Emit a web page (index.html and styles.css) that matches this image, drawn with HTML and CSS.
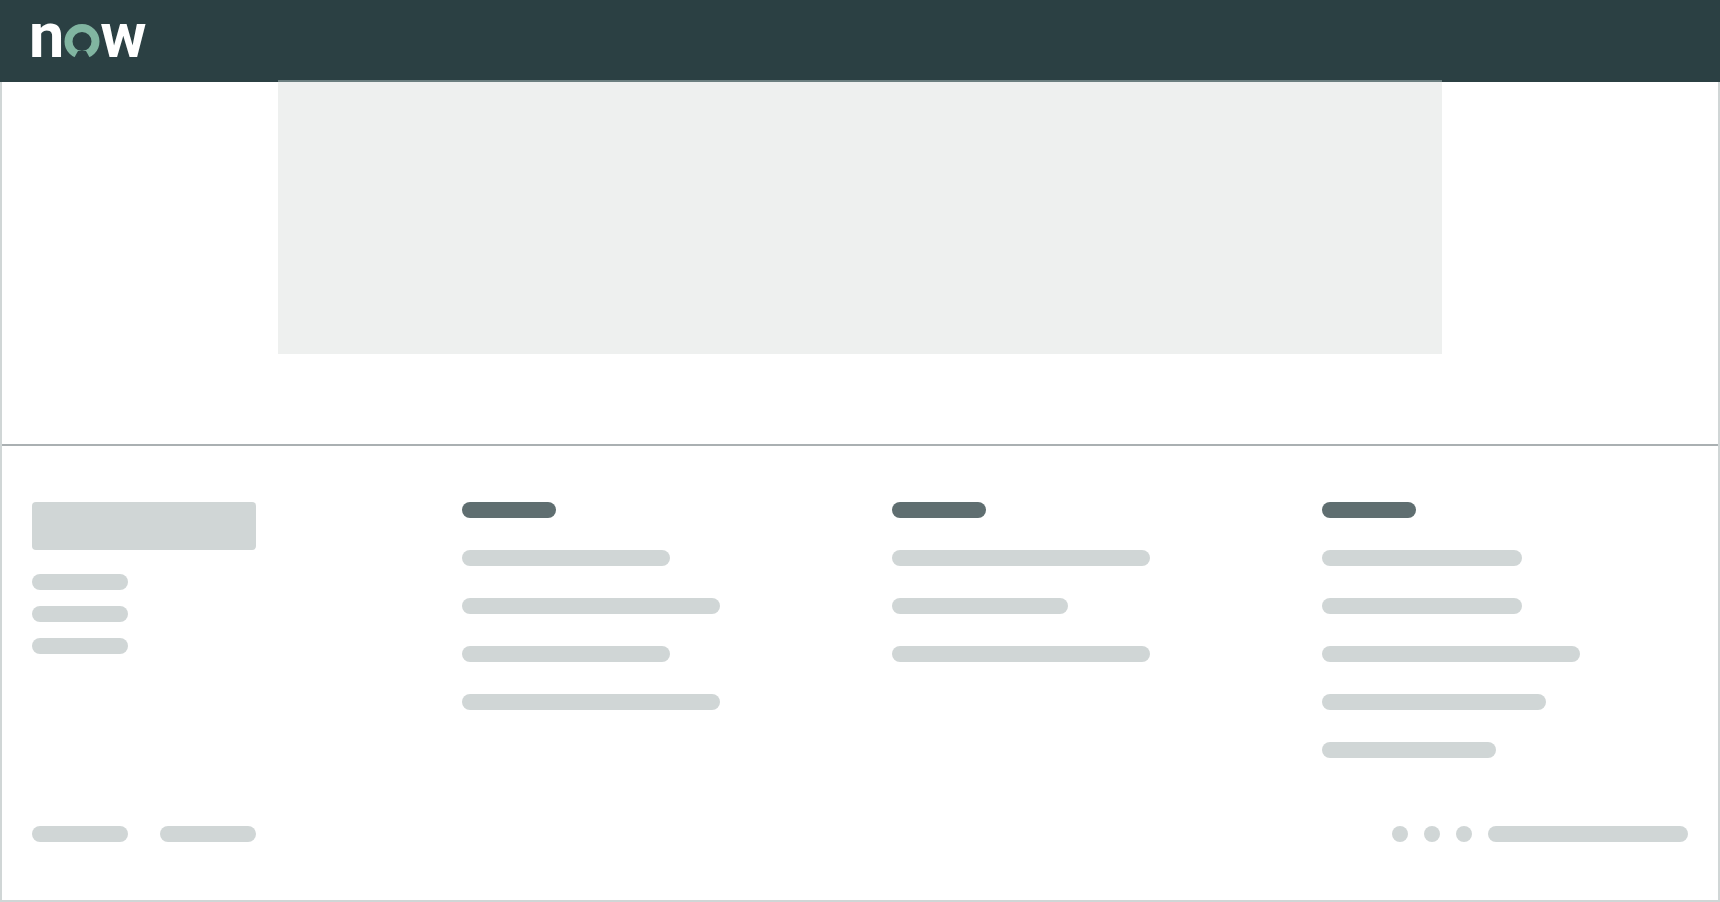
FILE: index.html
```html
<!DOCTYPE html>
<html lang="en">
<head>
    <meta charset="UTF-8">
    <title>Now</title>
    <link rel="stylesheet" href="styles.css">
</head>
<body>
    <header class="topbar">
        <div class="logo">
            <span class="logo-letter">n</span>
            <svg class="logo-o" width="36" height="36" viewBox="0 0 36 36">
                <circle cx="18" cy="17.5" r="13.5" fill="none" stroke="#81b5a1" stroke-width="8"/>
                <path d="M14 27 L22 27 L27 36 L9 36 Z" fill="#2b4043"/>
            </svg>
            <span class="logo-letter">w</span>
        </div>
    </header>

    <main class="frame">
        <section class="hero-wrap">
            <div class="hero"></div>
        </section>

        <footer class="footer">
            <div class="columns">
                <div class="brand">
                    <div class="brand-box"></div>
                    <div class="brand-lines">
                        <div class="bar w-96"></div>
                        <div class="bar w-96"></div>
                        <div class="bar w-96"></div>
                    </div>
                </div>
                <div class="col">
                    <div class="bar heading"></div>
                    <div class="bar w-208"></div>
                    <div class="bar w-258"></div>
                    <div class="bar w-208"></div>
                    <div class="bar w-258"></div>
                </div>
                <div class="col">
                    <div class="bar heading"></div>
                    <div class="bar w-258"></div>
                    <div class="bar w-176"></div>
                    <div class="bar w-258"></div>
                </div>
                <div class="col">
                    <div class="bar heading"></div>
                    <div class="bar w-200"></div>
                    <div class="bar w-200"></div>
                    <div class="bar w-258"></div>
                    <div class="bar w-224"></div>
                    <div class="bar w-174"></div>
                </div>
            </div>

            <div class="legal">
                <div class="legal-links">
                    <div class="bar w-96"></div>
                    <div class="bar w-96"></div>
                </div>
                <div class="legal-social">
                    <div class="dot"></div>
                    <div class="dot"></div>
                    <div class="dot"></div>
                    <div class="bar w-200"></div>
                </div>
            </div>
        </footer>
    </main>
</body>
</html>
```

FILE: styles.css
```css
html, body {
    margin: 0;
    padding: 0;
}
body {
    background-color: #fff;
    font-family: "Roboto", "Liberation Sans", sans-serif;
}
.topbar {
    height: 82px;
    background-color: #2b4043;
    display: flex;
    align-items: flex-start;
    padding-left: 29px;
}
.logo {
    display: flex;
    align-items: flex-start;
    height: 60px;
    margin-top: 18px;
}
.logo-letter {
    font-size: 63px;
    font-weight: 700;
    line-height: 36px;
    color: #fff;
}
.logo-o {
    margin: 6px 0 0 0;
}
.frame {
    height: 820px;
    box-sizing: border-box;
    border: 2px solid #d0d6d6;
    border-top: none;
}
.hero-wrap {
    height: 362px;
    display: flex;
    justify-content: center;
    align-items: flex-start;
    border-bottom: 2px solid #aab0b2;
}
.hero {
    width: 1164px;
    height: 272px;
    margin-top: -2px;
    background-color: #eef0ef;
    border-top: 2px solid #6c7f80;
}
.footer {
    padding: 56px 30px 0;
}
.columns {
    display: grid;
    grid-template-columns: 430px 430px 430px 1fr;
    height: 324px;
}
.bar {
    height: 16px;
    border-radius: 8px;
    background-color: #d0d6d6;
}
.brand-box {
    width: 224px;
    height: 48px;
    border-radius: 4px;
    background-color: #d0d6d6;
    margin-bottom: 24px;
}
.brand-lines {
    display: flex;
    flex-direction: column;
    gap: 16px;
}
.col {
    display: flex;
    flex-direction: column;
    gap: 32px;
}
.bar.heading {
    width: 94px;
    background-color: #5f6e70;
}
.w-96 { width: 96px; }
.w-174 { width: 174px; }
.w-176 { width: 176px; }
.w-200 { width: 200px; }
.w-208 { width: 208px; }
.w-224 { width: 224px; }
.w-258 { width: 258px; }
.legal {
    display: flex;
    justify-content: space-between;
}
.legal-links {
    display: flex;
    gap: 32px;
}
.legal-social {
    display: flex;
    gap: 16px;
}
.dot {
    width: 16px;
    height: 16px;
    border-radius: 50%;
    background-color: #d0d6d6;
}
```
